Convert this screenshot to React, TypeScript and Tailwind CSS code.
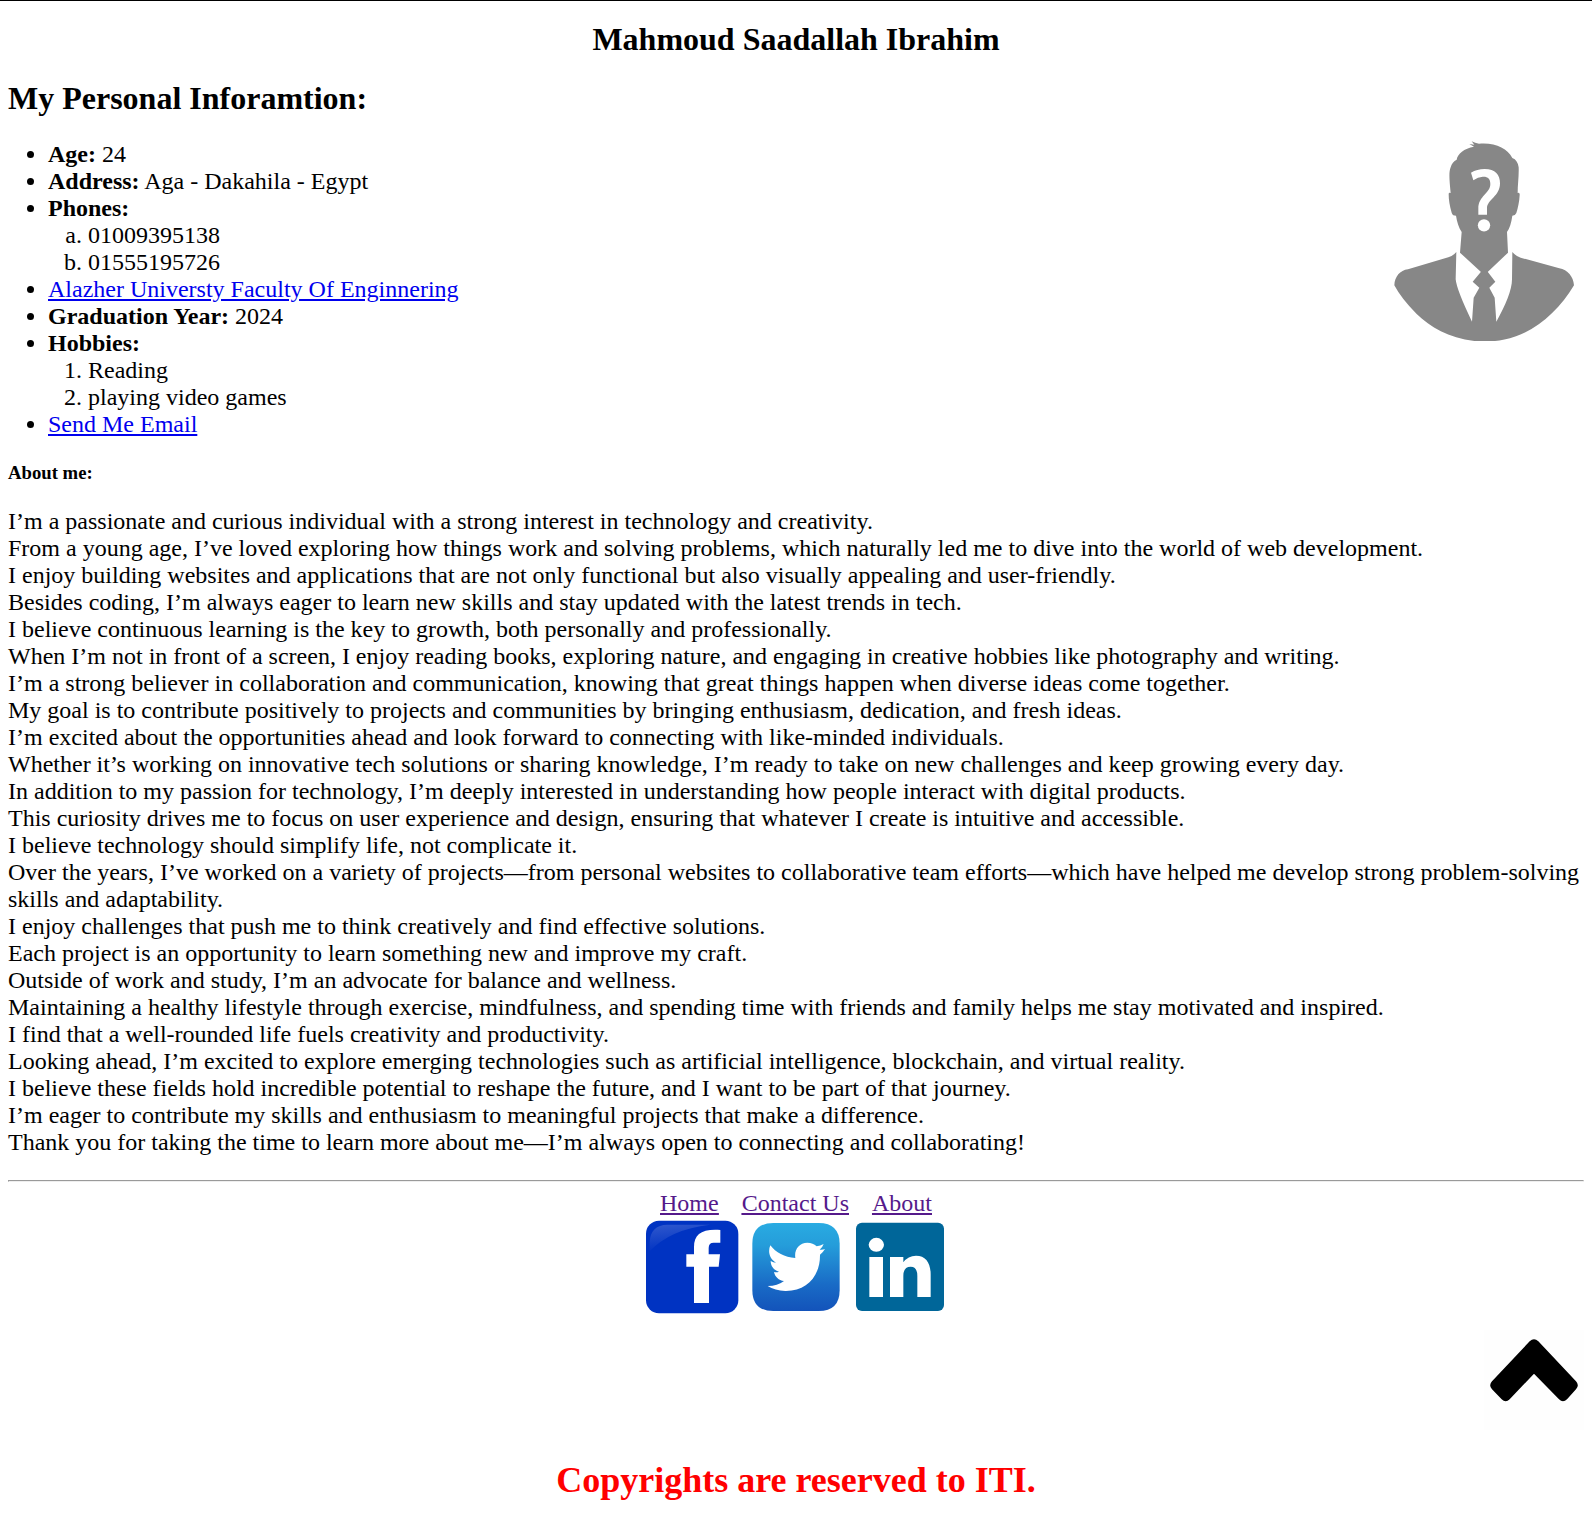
const aboutLines: string[] = [
  "I’m a passionate and curious individual with a strong interest in technology and creativity.",
  "From a young age, I’ve loved exploring how things work and solving problems, which naturally led me to dive into the world of web development.",
  "I enjoy building websites and applications that are not only functional but also visually appealing and user-friendly.",
  "Besides coding, I’m always eager to learn new skills and stay updated with the latest trends in tech.",
  "I believe continuous learning is the key to growth, both personally and professionally.",
  "When I’m not in front of a screen, I enjoy reading books, exploring nature, and engaging in creative hobbies like photography and writing.",
  "I’m a strong believer in collaboration and communication, knowing that great things happen when diverse ideas come together.",
  "My goal is to contribute positively to projects and communities by bringing enthusiasm, dedication, and fresh ideas.",
  "I’m excited about the opportunities ahead and look forward to connecting with like-minded individuals.",
  "Whether it’s working on innovative tech solutions or sharing knowledge, I’m ready to take on new challenges and keep growing every day.",
  "In addition to my passion for technology, I’m deeply interested in understanding how people interact with digital products.",
  "This curiosity drives me to focus on user experience and design, ensuring that whatever I create is intuitive and accessible.",
  "I believe technology should simplify life, not complicate it.",
  "Over the years, I’ve worked on a variety of projects—from personal websites to collaborative team efforts—which have helped me develop strong problem-solving skills and adaptability.",
  "I enjoy challenges that push me to think creatively and find effective solutions.",
  "Each project is an opportunity to learn something new and improve my craft.",
  "Outside of work and study, I’m an advocate for balance and wellness.",
  "Maintaining a healthy lifestyle through exercise, mindfulness, and spending time with friends and family helps me stay motivated and inspired.",
  "I find that a well-rounded life fuels creativity and productivity.",
  "Looking ahead, I’m excited to explore emerging technologies such as artificial intelligence, blockchain, and virtual reality.",
  "I believe these fields hold incredible potential to reshape the future, and I want to be part of that journey.",
  "I’m eager to contribute my skills and enthusiasm to meaningful projects that make a difference.",
  "Thank you for taking the time to learn more about me—I’m always open to connecting and collaborating!",
];

function Avatar() {
  return (
    <svg className="h-[220px] w-[212px]" viewBox="0 0 636 660" aria-label="Portrait placeholder">
      <g fill="#878787">
        <path d="M228 257 C222 257 217 255 215 248 C209 228 206 210 206 192 Q206 187 212 189 C208 150 206 126 212 112 C215 101 221 93 230 89 C233 71 252 55 282 50 L268 42 L283 44 L275 34 Q285 40 297 41 C345 37 382 54 397 84 C408 88 414 98 416 112 C417 139 413 163 413 189 Q420 187 419 195 C418 215 414 234 409 249 Q406 257 397 257 C394 279 389 294 381 306 L384 368 L323 426 L303 426 L240 368 L245 306 C236 292 231 276 228 257Z" />
        <path d="M303 425 H323 L346 455 L328 473 L344 503 L349 575 C377 525 396 480 396 448 L397 366 Q408 379 422 383 L538 415 C563 419 580 440 582 466 C541 535 480 593 408 619 Q370 632 345 633 H283 C205 624 151 591 110 552 Q64 506 43 466 C44 440 60 421 84 418 L205 382 Q219 378 229 366 L227 448 Q230 480 276 575 L281 503 L298 473 L278 455Z" />
      </g>
      <path d="M273 128 Q291 117 314 117 C346 117 360 134 360 160 C360 200 321 208 321 236 V254 H295 V235 C295 198 331 190 331 162 C331 146 323 139 308 140 Q294 141 280 151Z" fill="white" />
      <circle cx="312" cy="286" r="18.5" fill="white" />
    </svg>
  );
}

function FacebookIcon() {
  return (
    <svg className="size-[94px]" viewBox="45 150 282 282" aria-label="Facebook">
      <defs>
        <linearGradient id="gloss" x1="0" y1="0" x2="0.25" y2="1">
          <stop offset="0" stopColor="#3058cd" />
          <stop offset="1" stopColor="#0033c2" />
        </linearGradient>
      </defs>
      <rect x="48" y="152" width="277" height="278" rx="39" fill="#0033c2" />
      <path d="M59 244 V216 Q62 165 112 164 H240 Q120 178 59 244Z" fill="url(#gloss)" />
      <path d="M192 399 V290 H169 V253 H192 V231 C192 193 215 176 271 180 V218 H251 Q236 218 236 234 V253 H270 L266 290 H237 V399Z" fill="white" />
    </svg>
  );
}

function TwitterIcon() {
  return (
    <svg className="size-[90px]" viewBox="363 156 270 270" aria-label="Twitter">
      <defs>
        <linearGradient id="sky" x1="0" y1="0" x2="0" y2="1">
          <stop offset="0" stopColor="#29abe2" />
          <stop offset="0.25" stopColor="#259dda" />
          <stop offset="0.7" stopColor="#196bc6" />
          <stop offset="1" stopColor="#1353ba" />
        </linearGradient>
      </defs>
      <path d="M430 159 H566 Q629 159 629 222 V360 Q629 423 566 423 H430 Q367 423 367 360 V222 Q367 159 430 159Z" fill="url(#sky)" />
      <path d="M421 226 C437 248 464 262 496 264 C492 239 507 218 532 218 C544 218 552 222 560 229 Q571 228 581 222 Q577 233 569 239 Q578 240 585 237 Q579 247 570 254 C571 318 530 364 466 363 Q435 362 413 348 Q443 348 462 333 C446 331 435 321 432 306 Q440 308 447 305 C431 300 422 288 422 273 Q430 278 438 278 C418 266 413 244 421 226Z" fill="white" />
    </svg>
  );
}

function LinkedInIcon() {
  return (
    <svg className="size-[90px]" viewBox="675 156 270 270" aria-label="LinkedIn">
      <rect x="678" y="158" width="264" height="265" rx="18" fill="#006699" />
      <ellipse cx="739" cy="224.500" rx="23" ry="21" fill="white" />
      <path d="M718 261 H759 V381 H718Z" fill="white" />
      <path d="M780 261 H820 V277 Q834 257 858 257 C887 257 902 278 902 313 V381 H862 V318 Q862 290 842 290 Q820 290 820 318 V381 H780Z" fill="white" />
    </svg>
  );
}

export default function App() {
  return (
    <div className="h-[1531px] overflow-hidden border-t border-black bg-white px-2 font-['Liberation_Serif',serif] text-2xl leading-[27px] text-black">
      <h1 className="mt-5 text-center text-[32px] leading-[36px] font-bold">Mahmoud Saadallah Ibrahim</h1>
      <h1 className="mt-[23px] text-[32px] leading-[36px] font-bold">My Personal Inforamtion:</h1>

      <section className="mt-[25px] flex h-[297px] items-start justify-between">
        <ul className="list-disc pl-10">
          <li><b>Age:</b> 24</li>
          <li><b>Address:</b> Aga - Dakahila - Egypt</li>
          <li>
            <b>Phones:</b>
            <ol className="list-[lower-alpha] pl-10">
              <li>01009395138</li>
              <li>01555195726</li>
            </ol>
          </li>
          <li><a href="#" className="text-[#0000ee] underline">Alazher Universty Faculty Of Enginnering</a></li>
          <li><b>Graduation Year:</b> 2024</li>
          <li>
            <b>Hobbies:</b>
            <ol className="list-decimal pl-10">
              <li>Reading</li>
              <li>playing video games</li>
            </ol>
          </li>
          <li><a href="#" className="text-[#0000ee] underline">Send Me Email</a></li>
        </ul>
        <div className="-mt-[11px] -mr-2 shrink-0">
          <Avatar />
        </div>
      </section>

      <h3 className="mt-[25px] text-[18.72px] leading-[20px] font-bold">About me:</h3>
      <div className="mt-[25px]">
        {aboutLines.map((line) => (
          <p key={line}>{line}</p>
        ))}
      </div>

      <hr className="mt-[24px] h-[2px] border border-[#9a9a9a] border-r-[#eee] border-b-[#eee]" />

      <nav className="mt-[8px] flex justify-center gap-[23px] text-[#551a8b] underline">
        <a href="#">Home</a>
        <a href="#">Contact Us</a>
        <a href="#">About</a>
      </nav>
      <div className="mt-[3px] flex h-[94px] items-start justify-center pr-0.5">
        <FacebookIcon />
        <div className="mt-0.5 ml-3"><TwitterIcon /></div>
        <div className="mt-0.5 ml-3.5"><LinkedInIcon /></div>
      </div>

      <div className="mt-[16px] flex h-[100px] justify-end">
        <a href="#" aria-label="Back to top" className="flex h-[100px] w-[100px] items-start bg-[#fefefe]">
          <svg className="h-[100px] w-[100px]" viewBox="72 60 300 300">
            <path d="M209 94 Q222 81 235 94 L348 214 Q359 226 348 238 L321 268 Q309 280 297 268 L222 191 L149 268 Q137 280 125 268 L96 238 Q85 226 96 214Z" fill="black" />
          </svg>
        </a>
      </div>

      <h2 className="mt-[30px] text-center text-[36px] leading-[41px] font-bold text-[#ff0000]">Copyrights are reserved to ITI.</h2>
    </div>
  );
}
